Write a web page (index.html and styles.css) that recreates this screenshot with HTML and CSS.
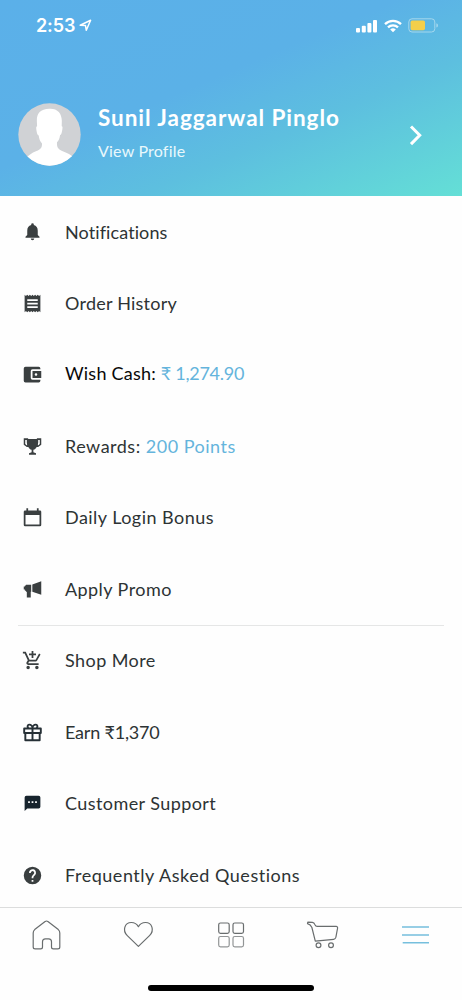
FILE: index.html
```html
<!DOCTYPE html>
<html lang="en">
<head>
<meta charset="utf-8">
<meta name="viewport" content="width=device-width, initial-scale=1">
<title>Menu</title>
<link rel="stylesheet" href="styles.css">
</head>
<body>
<div class="screen">
  <header class="header">
    <div class="status">
      <span class="time">2:53</span>
      <svg class="locate" width="13" height="13" viewBox="0 0 13 13"><path d="M1.2 6.2 11.6 1.2 7.3 11.3 6.5 6.6Z"/></svg>
      <div class="indicators">
        <svg width="22" height="14" viewBox="0 0 22 14"><rect x="0" y="9" width="4" height="4.6" rx="1"/><rect x="5.8" y="6.7" width="4" height="6.9" rx="1"/><rect x="11.4" y="4" width="4" height="9.6" rx="1"/><rect x="17" y="1" width="4" height="12.6" rx="1"/></svg>
        <svg width="18" height="14" viewBox="0 0 18 14"><g class="waves"><path d="M1 5.1a11.4 11.4 0 0 1 16 0"/><path d="M4 8.4a7.1 7.1 0 0 1 10 0"/></g><path d="M9 13.2 6.2 10.5a4 4 0 0 1 5.6 0Z"/></svg>
        <svg width="31" height="15" viewBox="0 0 31 15"><rect class="shell" x=".8" y=".8" width="26" height="13.2" rx="3.2"/><rect class="charge" x="2.6" y="2.6" width="14.4" height="9.6" rx="1.6"/><path class="tip" d="M28.4 5.2q1.6.5 1.6 2.2t-1.6 2.2Z"/></svg>
      </div>
    </div>
    <div class="profile">
      <svg class="avatar" width="63" height="63" viewBox="0 0 63 63"><defs><clipPath id="disc"><circle cx="31.5" cy="31.5" r="31.2"/></clipPath></defs><circle class="disc" cx="31.5" cy="31.5" r="31.2"/><path clip-path="url(#disc)" d="M31.5 5.800c8.200-.4 12.700 5 12.300 13l-.1 4.500c1.200.1.900 2.100.2 5.500-.4 1.900-.8 3.100-1.800 3.200-.5 3.800-1.500 5.500-3.100 7.300-.3 5.300 1 7.200 6.300 9.200 4 1.500 8 3.200 9.500 5.500L55 64H8v-8.500c2-3 5.500-5.500 10.500-7.500 4.300-1.700 5.600-3.500 5.500-7.500-2-2.200-2.900-4.600-3.300-8-1.300-.5-1.700-2.300-2.100-4.300-.5-2.700-.7-4.700.5-4.900l-.2-4C18.400 11 21.500 6 31.500 5.800Z"/></svg>
      <div class="person"><div class="name">Sunil Jaggarwal Pinglo</div><div class="view">View Profile</div></div>
      <svg class="chevron" width="14" height="22" viewBox="0 0 14 22"><path d="m2 2.500 8.700 8.800L2 20.100"/></svg>
    </div>
  </header>
  <main class="menu">
    <a class="row"><svg class="icon" viewBox="0 0 24 24"><path d="M12 22a2 2 0 0 0 2-2h-4a2 2 0 0 0 2 2Zm6-6v-5c0-3.100-1.600-5.600-4.500-6.300V4a1.500 1.500 0 0 0-3 0v.700C7.600 5.400 6 7.900 6 11v5l-2 2v1h16v-1Z"/></svg><span class="t1">Notifications</span></a>
    <a class="row"><svg class="icon" viewBox="0 0 24 24"><path d="M18 17H6v-2h12Zm0-4H6v-2h12Zm0-4H6V7h12ZM3 22l1.500-1.500L6 22l1.500-1.500L9 22l1.500-1.500L12 22l1.500-1.500L15 22l1.500-1.500L18 22l1.500-1.500L21 22V2l-1.500 1.500L18 2l-1.500 1.500L15 2l-1.500 1.500L12 2l-1.500 1.500L9 2 7.500 3.500 6 2 4.500 3.500 3 2Z"/></svg><span class="t2">Order History</span></a>
    <a class="row wish"><svg class="icon" viewBox="0 0 24 24"><path d="M21 18v1a2 2 0 0 1-2 2H4a2 2 0 0 1-2-2V5a2 2 0 0 1 2-2h15a2 2 0 0 1 2 2v1h-9a2 2 0 0 0-2 2v8a2 2 0 0 0 2 2Zm-9-2h10V8H12Zm4-2.500a1.500 1.500 0 1 1 0-3 1.500 1.500 0 0 1 0 3Z"/></svg><span class="t3">Wish Cash: <b>₹ 1,274.90</b></span></a>
    <a class="row"><svg class="icon" viewBox="0 0 24 24"><path fill-rule="evenodd" d="M2 2.500h5v1h10v-1h5V10l-3.500 2.500h-1.800c-.7 1.800-1.900 2.800-3.700 3.200v2.800l3 1.300v1.700H8v-1.700l3-1.300v-2.800c-1.800-.4-3-1.400-3.700-3.200H5.500L2 10ZM3.700 4.500v4.700l1.600 1.300h.6l-.4-3v-3Zm14.800 0v3l-.4 3h.6l1.600-1.300V4.500Z"/></svg><span class="t4">Rewards: <b>200 Points</b></span></a>
    <a class="row"><svg class="icon" viewBox="0 0 24 24"><path fill-rule="evenodd" d="M5 1.500h2V4h10V1.500h2V4h1.500A1.500 1.500 0 0 1 22 5.500v15a1.500 1.500 0 0 1-1.500 1.500h-17A1.500 1.500 0 0 1 2 20.500v-15A1.500 1.500 0 0 1 3.500 4H5ZM4 9v11h16V9Z"/></svg><span class="t5">Daily Login Bonus</span></a>
    <a class="row"><svg class="icon" viewBox="0 0 24 24"><path d="M22 2.500v15.500l-10.200-3.500V6.200ZM4.500 6.500h6v8H10V21H5.500v-6.500h-1v-1.200H3.300v-1.200H2V8.500h1.300V7.300h1.200Z"/></svg><span class="t6">Apply Promo</span></a>
    <a class="row ruled"><svg class="icon" viewBox="0 0 24 24"><path d="M11 9h2V6h3V4h-3V1h-2v3H8v2h3Zm-4 9a2 2 0 1 0 0 4 2 2 0 0 0 0-4Zm10 0a2 2 0 1 0 0 4 2 2 0 0 0 0-4Zm-9.800-3.200.900-1.800h7.500a2 2 0 0 0 1.700-1L21.200 5l-1.700-1-3.900 7h-7L4.300 2H1v2h2l3.600 7.600L5.200 14c-.7 1.300.3 3 1.800 3h12v-2H7.400a.2.200 0 0 1-.2-.2Z"/></svg><span class="t7">Shop More</span></a>
    <a class="row"><svg class="icon gift" viewBox="0 0 24 24"><path d="M2.500 7.500h19v5h-19Zm1.300 5v8.300h16.400v-8.300M12 7.500v13M12 7.300H8.500C6 7.300 5.500 3 8.300 3 10.500 3 12 5 12 7.300Zm0 0h3.500c2.500 0 3-4.300.2-4.300C13.500 3 12 5 12 7.300Z"/></svg><span class="t8">Earn ₹1,370</span></a>
    <a class="row"><svg class="icon chat" viewBox="0 0 24 24"><path fill-rule="evenodd" d="M5 3.200h14a2 2 0 0 1 2 2v10.600a2 2 0 0 1-2 2H6L3 20.500V5.200a2 2 0 0 1 2-2Zm2 6.300v2h2v-2Zm4 0v2h2v-2Zm4 0v2h2v-2Z"/></svg><span class="t9">Customer Support</span></a>
    <a class="row"><svg class="icon" viewBox="0 0 24 24"><path d="M12 2a10 10 0 1 0 0 20 10 10 0 0 0 0-20Zm1 17h-2v-2h2Zm2.100-7.700-.9.900C13.400 12.900 13 13.500 13 15h-2v-.5c0-1.100.4-2.100 1.200-2.800l1.200-1.300A2 2 0 1 0 10 9H8a4 4 0 1 1 7.100 2.300Z"/></svg><span class="t10">Frequently Asked Questions</span></a>
  </main>
  <nav class="tabs">
    <div class="tab-row">
      <svg width="34" height="32" viewBox="0 0 34 32"><path d="M17.500 2q.8 0 1.400.6l10.400 8q1.500 1.400 1.500 3.400v14q0 1.900-1.900 1.900h-4.500q-1.900 0-1.900-1.900v-5.200q0-2.900-2.900-2.900h-3.200q-2.900 0-2.900 2.900V28q0 1.900-1.900 1.900H6.100q-1.900 0-1.900-1.900V14q0-2 1.500-3.400l10.400-8q.6-.6 1.400-.6Z"/></svg>
      <svg width="34" height="32" viewBox="0 0 34 32"><path d="M17.400 27.400 6.300 16.600C1 11.300 3.800 3.500 10.300 3.500c3.200 0 5.600 1.300 7.100 4.200 1.500-2.900 3.900-4.200 7.100-4.200 6.500 0 9.300 7.800 4 13.100Z"/></svg>
      <svg width="34" height="32" viewBox="0 0 34 32"><g><rect x="4.700" y="4" width="10.500" height="10.300" rx="1.800"/><rect x="19" y="4" width="10.500" height="10.300" rx="1.800"/></g><g class="faded"><rect x="4.700" y="17.500" width="10.500" height="10.300" rx="1.800"/><rect x="19" y="17.500" width="10.500" height="10.300" rx="1.800"/></g></svg>
      <svg width="34" height="32" viewBox="0 0 34 32"><path d="M1.500 4.600 1.800 3.200l4.600.1q1.700.3 2.400 2.100.9 2 2.300 2h19q1.600.1 1.500 1.600l-1.700 9.200q-.5 1.900-2.200 2.100L9.300 22.100 5.900 8.500Q4.700 5.400 1.500 4.600Z"/><circle cx="12.500" cy="26.200" r="2.400"/><circle cx="25" cy="26.200" r="2.400"/></svg>
      <svg class="active" width="34" height="32" viewBox="0 0 34 32"><path d="M4 8h27M4 16h27M4.700 23.700h26.300"/></svg>
    </div>
    <div class="home-bar"></div>
  </nav>
</div>
</body>
</html>
```
FILE: styles.css
```css
* { box-sizing: border-box; }
body { margin: 0; background: #fefefe; font-family: Lato, "Noto Sans", sans-serif; color: #2d3334; font-variant-ligatures: none; }
svg { display: block; flex: none; }
.screen { height: 1000px; display: flex; flex-direction: column; overflow: hidden; }
.header { flex: none; height: 196px; background: linear-gradient(157deg, #5bb0e9 0%, #5bb1e7 43%, #5dbfdf 65%, #64dfd6 100%); color: #fff; }
.status { height: 51px; padding: 0 23px 0 36px; display: flex; align-items: center; }
.time { font: 600 18px/22px Inter, sans-serif; letter-spacing: -.1px; }
.locate { margin-left: 4px; fill: none; stroke: #fff; stroke-width: 1.5; stroke-linejoin: round; }
.indicators { margin-left: auto; display: flex; gap: 6px; align-items: center; fill: #fff; }
.waves { fill: none; stroke: #fff; stroke-width: 2.3; }
.shell { fill: none; stroke: #a4d7ed; stroke-width: 1; }
.charge { fill: #f3cf4a; }
.tip { fill: #a4d7ed; }
.profile { display: flex; align-items: center; height: 63px; margin-top: 52px; padding: 0 39px 0 17.5px; }
.avatar { fill: #fff; }
.disc { fill: #d0d2d5; }
.person { margin-left: 17.5px; white-space: nowrap; }
.name { font-size: 22.5px; font-weight: 700; line-height: 32px; letter-spacing: .95px; }
.view { font-size: 16px; line-height: 32px; margin-top: 1px; color: #e9f8fc; letter-spacing: .2px; }
.chevron { margin-left: auto; fill: none; stroke: #fff; stroke-width: 3; }
.menu { flex: 1; min-height: 0; overflow: hidden; }
.row { height: 71.5px; padding-left: 22px; display: flex; align-items: center; white-space: nowrap; font-size: 18px; line-height: 24px; }
.row span { margin-left: 22px; padding-bottom: 1.5px; }
.row b { font-weight: 400; color: #64b4dc; }
.row .t1 { letter-spacing: .1px; padding-bottom: 0; }
.t2 { letter-spacing: .23px; }
.t3 { letter-spacing: .23px; }
.t3 b { letter-spacing: -.27px; }
.row .t3 { padding-bottom: 3px; }
.t4 { letter-spacing: .5px; }
.t5 { letter-spacing: .46px; }
.t6 { letter-spacing: .43px; }
.t7 { letter-spacing: .43px; }
.t8 { letter-spacing: -.2px; }
.t9 { letter-spacing: .42px; }
.t10 { letter-spacing: .53px; }
.wish { color: #080808; }
.icon { width: 21px; height: 21px; fill: #3a3f40; }
.gift { fill: none; stroke: #263036; stroke-width: 2.2; stroke-linejoin: round; }
.chat { fill: #17242d; }
.ruled { background: linear-gradient(#e5e6e6, #e5e6e6) 18px 0 / calc(100% - 36px) 1px no-repeat; }
.tabs { flex: none; height: 93px; border-top: 1px solid #dcdddd; background: #fefefe; display: flex; flex-direction: column; align-items: center; }
.tab-row { width: 100%; display: flex; justify-content: space-between; padding: 11px 30px 0 29px; fill: none; stroke: #696d6e; stroke-width: 1.2; stroke-linejoin: round; }
.faded { stroke: #929596; }
.active { stroke: #76bfdd; stroke-width: 1.5; }
.home-bar { width: 166px; height: 6px; margin-top: 34px; border-radius: 3px; background: #000; }
```
